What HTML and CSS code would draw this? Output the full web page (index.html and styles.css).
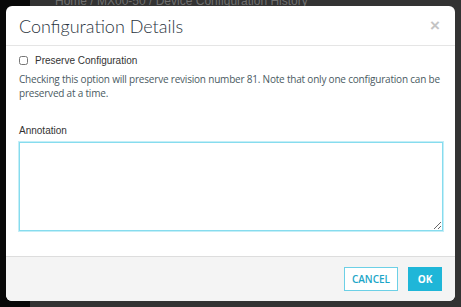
FILE: index.html
```html
<!DOCTYPE html>
<html lang="en">
<head>
    <meta charset="UTF-8">
    <title>Configuration Details</title>
    <link rel="stylesheet" href="styles.css">
</head>
<body>

<div class="page">
    <div class="sidebar"></div>
    <div class="main">
        <div class="breadcrumb">Home / MX00-50 / Device Configuration History</div>
    </div>
</div>

<div class="modal">
    <div class="modal-header">
        <h2 class="modal-title">Configuration Details</h2>
        <span class="close">&times;</span>
    </div>
    <div class="modal-body">
        <label class="check-row">
            <input type="checkbox" class="check">
            <span>Preserve Configuration</span>
        </label>
        <p class="help">Checking this option will preserve revision number 81. Note that only one configuration can be preserved at a time.</p>
        <label class="field-label" for="annotation">Annotation</label>
        <textarea id="annotation" class="annotation"></textarea>
    </div>
    <div class="modal-footer">
        <button class="btn btn-cancel">CANCEL</button>
        <button class="btn btn-ok">OK</button>
    </div>
</div>

</body>
</html>
```

FILE: styles.css
```css
body {
    margin: 0;
    background-color: #2f2f2f;
    font-family: "Liberation Sans", Arial, sans-serif;
    overflow: hidden;
}

.page {
    display: flex;
    height: 307px;
}

.sidebar {
    width: 30px;
    background-color: #080808;
}

.main {
    flex: 1;
    background-color: #333;
}

.breadcrumb {
    margin: -5px 0 0 25px;
    font-size: 12px;
    line-height: 12px;
    color: #6f6f6f;
}

.modal {
    position: absolute;
    left: 6px;
    top: 6px;
    width: 449px;
    height: 295px;
    background-color: white;
    border-radius: 6px;
    overflow: hidden;
    display: flex;
    flex-direction: column;
}

.modal-header {
    display: flex;
    align-items: center;
    justify-content: space-between;
    height: 39px;
    padding: 0 13px;
    border-bottom: 1px solid #e5e5e5;
}

.modal-title {
    margin: 0;
    font-family: Lato, sans-serif;
    font-weight: 300;
    font-size: 18px;
    color: #2a3440;
}

.close {
    font-size: 17px;
    color: #c4c4c4;
    font-weight: bold;
    margin-right: 2px;
}

.modal-body {
    flex: 1;
    padding: 9px 12px 0 13px;
}

.check-row {
    display: flex;
    align-items: center;
    gap: 7px;
    font-size: 10px;
    color: #333;
}

.check {
    margin: 0;
    width: 9px;
    height: 9px;
}

.help {
    margin: 6px 0 0;
    font-family: "Open Sans", sans-serif;
    font-size: 10px;
    line-height: 14px;
    letter-spacing: -0.2px;
    color: #4a5a62;
}

.field-label {
    display: block;
    margin-top: 25px;
    font-size: 10px;
    color: #333;
}

.annotation {
    display: block;
    box-sizing: border-box;
    width: 100%;
    height: 89px;
    margin-top: 6px;
    border: 1px solid #86dcee;
    box-shadow: 0 0 0 1px #c4eef7;
    outline: none;
    resize: vertical;
}

.modal-footer {
    display: flex;
    justify-content: flex-end;
    gap: 10px;
    height: 45px;
    padding: 10px 13px 0;
    box-sizing: border-box;
    background-color: #f4f4f4;
    border-top: 1px solid #ddd;
}

.btn {
    height: 24px;
    font-family: "Open Sans", sans-serif;
    font-size: 10px;
    font-weight: 600;
    border-radius: 0;
    cursor: pointer;
}

.btn-cancel {
    width: 54px;
    background-color: white;
    color: #1ca6c7;
    border: 1px solid #6cd0e6;
}

.btn-ok {
    width: 34px;
    background-color: #1fb6d8;
    color: white;
    border: none;
    font-weight: 700;
}
```
